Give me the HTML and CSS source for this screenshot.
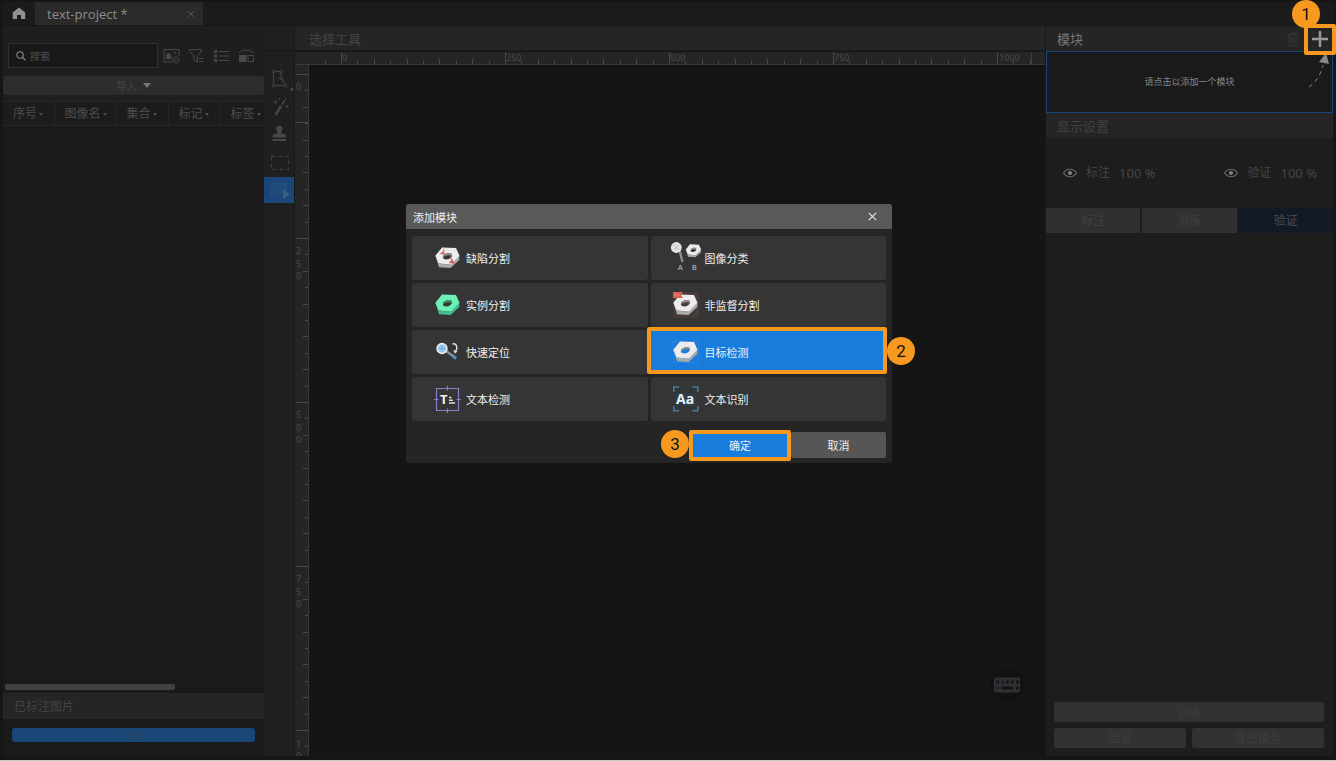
FILE: index.html
```html
<!DOCTYPE html>
<html lang="zh-CN">
<head>
<meta charset="utf-8">
<title>text-project</title>
<link rel="stylesheet" href="styles.css">
</head>
<body>
<svg class="defs" width="0" height="0" aria-hidden="true">
  <defs>
    <symbol id="nut" viewBox="0 0 25 22">
      <path class="nut-side" d="M0.5 9 L4 20.2 L15.5 21 L24.3 13 V8.6 L15.5 17.5 L3.5 16.8 Z"/>
      <path class="nut-face" fill-rule="evenodd" d="M0.3 8.8 L7 0.4 L21 1.1 L24.5 8.8 L15.8 17.6 L3.5 16.6 Z M8.1 11 C8.9 12.9 12.6 12.9 15.2 11.2 C17.4 9.8 17.4 7.1 15.6 6.3 C13.5 5.3 9.9 6.3 8.5 8.3 C7.8 9.3 7.7 10.2 8.1 11 Z"/>
      <path class="nut-hole" d="M8.1 10.8 C8 8 12.5 5 15.8 6.4 C17 7.1 17 8.6 16.4 9.6 C15.6 7.6 10.3 8 8.1 10.8 Z"/>
    </symbol>
    <symbol id="eye" viewBox="0 0 14 10">
      <path d="M0.6 5 C3.5 0 10.5 0 13.4 5 C10.5 10 3.5 10 0.6 5 Z" fill="none" stroke="#6a6a6a" stroke-width="1.1"/>
      <circle cx="7" cy="5" r="2.1" fill="#808080"/>
    </symbol>
  </defs>
</svg>

<div class="app">
  <header class="topbar">
    <button class="home" aria-label="主页">
      <svg width="14" height="13" viewBox="0 0 14 13"><path d="M7 0.5 L0.8 5.5 V12 H5 V8 H9 V12 H13.2 V5.5 Z" fill="#929292"/></svg>
    </button>
    <div class="tab"><span>text-project *</span>
      <button class="tab-close" aria-label="关闭标签"><svg width="8" height="8" viewBox="0 0 8 8"><path d="M0.8 0.8 L7.2 7.2 M7.2 0.8 L0.8 7.2" stroke="#565656"/></svg></button>
    </div>
  </header>

  <div class="main">
    <aside class="left">
      <div class="filters">
        <label class="search">
          <svg width="10" height="10" viewBox="0 0 10 10"><circle cx="4" cy="4" r="3.2" fill="none" stroke="#888" stroke-width="1.1"/><path d="M6.3 6.3 L9.3 9.3" stroke="#888" stroke-width="1.3"/></svg>
          <input type="text" placeholder="搜索" aria-label="搜索">
        </label>
        <div class="filter-icons">
          <button aria-label="图片"><svg width="17" height="16" viewBox="0 0 17 16"><path d="M9 14 H1 V1.5 H16 V8" fill="none" stroke="#484848"/><path d="M3 11 V8.5 Q3 5 5.5 5 Q8 5 8 8 L9 11 Z" fill="#484848"/><circle cx="12" cy="4.5" r="1" fill="#484848"/><circle cx="12.8" cy="11.7" r="3" fill="none" stroke="#484848"/><circle cx="12.8" cy="11.7" r="1" fill="#484848"/></svg></button>
          <button aria-label="筛选"><svg width="17" height="16" viewBox="0 0 17 16"><path d="M1.5 1.5 H13.5 V3 L9.5 8 V14 L6 12 V8 L1.5 3 Z" fill="none" stroke="#484848"/><path d="M11 10.5 H15.5 M11 13.5 H15.5" stroke="#484848"/></svg></button>
          <button aria-label="列表"><svg width="17" height="16" viewBox="0 0 17 16"><path d="M1.5 2.5 H3.5 V4.5 H1.5 Z M1.5 7 H3.5 V9 H1.5 Z M1.5 11.5 H3.5 V13.5 H1.5 Z M6 3.5 H16 M6 8 H16 M6 12.5 H16" fill="none" stroke="#4c4c4c" stroke-width="1.2"/></svg></button>
          <button aria-label="切换"><svg width="17" height="16" viewBox="0 0 17 16"><path d="M1 5 C4 1 12 1 15.5 5" fill="none" stroke="#484848"/><rect x="1" y="7" width="7.5" height="7" fill="#4a4a4a"/><rect x="10" y="7.5" width="5.5" height="6" fill="none" stroke="#484848"/></svg></button>
        </div>
      </div>
      <button class="import">导入 <i class="caret"></i></button>
      <div class="list">
        <table>
          <thead><tr><th class="c1">序号<i></i></th><th class="c2">图像名<i></i></th><th class="c3">集合<i></i></th><th class="c3">标记<i></i></th><th class="c3">标签<i></i></th></tr></thead>
        </table>
        <div class="scrollbar"></div>
      </div>
      <h2 class="bar bar-small">已标注图片</h2>
      <div class="progress-wrap"><div class="progress">0/0</div></div>
    </aside>

    <nav class="tools" aria-label="工具">
      <div class="tools-top"></div>
      <button aria-label="多边形"><svg width="30" height="26" viewBox="0 0 30 26"><g fill="none" stroke="#474747"><path d="M9.5 7 V17.5 M11.5 5.5 H15.5 M11 19.5 H20 M17 7 V11 M18 13 L21 18"/><circle cx="9.5" cy="5.5" r="1.4"/><circle cx="17" cy="5.5" r="1.4"/><circle cx="17" cy="12" r="1.4"/><circle cx="9.5" cy="19.5" r="1.4"/><circle cx="21.5" cy="19.5" r="1.4"/></g><path d="M29 21 V24.5 H25.5 Z" fill="#555"/></svg></button>
      <button aria-label="魔棒"><svg width="30" height="26" viewBox="0 0 30 26"><path d="M11.5 21 L17 12" stroke="#454545" stroke-width="2.6"/><path d="M18 10.5 L20.5 6.5" stroke="#454545" stroke-width="2"/><path d="M11.5 6 V10 M9.5 8 H13.5 M23 11 V14 M21.5 12.5 H24.5 M15.5 4 V6 M21.5 4 V6" stroke="#454545"/></svg></button>
      <button aria-label="图章"><svg width="30" height="26" viewBox="0 0 30 26"><path d="M12 6.5 C12 2.5 18.5 2.5 18.5 6.5 C18.5 8.5 17 9 17 12 H20 C21.5 12 22 13 22 15.5 H8.5 C8.5 13 9 12 10.5 12 H13.5 C13.5 9 12 8.5 12 6.5 Z" fill="#474747"/><path d="M8.5 18 H22" stroke="#474747" stroke-width="2"/></svg></button>
      <button aria-label="矩形选框"><svg width="30" height="26" viewBox="0 0 30 26"><rect x="7.5" y="6.5" width="17" height="13" fill="none" stroke="#3f3f3f" stroke-dasharray="4 3"/></svg></button>
      <button class="active" aria-label="选择工具"><svg width="30" height="26" viewBox="0 0 30 26"><rect x="8" y="7" width="14" height="10" fill="#1f4b79" stroke="#2a527c" stroke-dasharray="2 1"/><path d="M7 6 h2 v2 h-2 z M21 6 h2 v2 h-2 z M7 16 h2 v2 h-2 z" fill="#1a4678" stroke="#2e557e"/><path d="M19 12 V22 L26 17.5 Z" fill="#3a5c80"/></svg></button>
    </nav>

    <section class="center">
      <h2 class="bar">选择工具</h2>
      <div class="workspace">
        <svg class="ruler-x" width="100%" height="13">
          <defs><pattern id="px" x="46" y="0" width="164" height="13" patternUnits="userSpaceOnUse"><path d="M0.5 0 V12 M16.5 9 V12 M33.5 7 V12 M49.5 9 V12 M66.5 7 V12 M82.5 9 V12 M98.5 7 V12 M115.5 9 V12 M131.5 7 V12 M148.5 9 V12" stroke="#494949"/></pattern></defs>
          <rect x="28" y="0" width="100%" height="13" fill="url(#px)"/>
          <path d="M736.5 0 V12" stroke="#3c3c3c"/>
          <g class="ruler-text"><text x="47" y="9">0</text><text x="211" y="9">250</text><text x="375" y="9">500</text><text x="539" y="9">750</text><text x="704" y="9">1000</text></g>
        </svg>
        <svg class="ruler-y" width="14" height="100%">
          <defs><pattern id="py" x="0" y="9" width="14" height="164" patternUnits="userSpaceOnUse"><path d="M1 0.5 H13 M10 16.5 H13 M8 33.5 H13 M10 49.5 H13 M8 66.5 H13 M10 82.5 H13 M8 98.5 H13 M10 115.5 H13 M8 131.5 H13 M10 148.5 H13" stroke="#494949"/></pattern></defs>
          <rect y="9" width="14" height="100%" fill="url(#py)"/>
          <path d="M0 57.5 H13" stroke="#494949"/>
          <g class="ruler-text"><text x="1" y="25">0</text><text x="1" y="189">2</text><text x="1" y="202">5</text><text x="1" y="214">0</text><text x="1" y="353">5</text><text x="1" y="366">0</text><text x="1" y="378">0</text><text x="1" y="517">7</text><text x="1" y="530">5</text><text x="1" y="542">0</text><text x="1" y="682">1</text><text x="1" y="694">0</text></g>
        </svg>
        <div class="canvas">
          <button class="keyboard" aria-label="快捷键"><svg width="26" height="16" viewBox="0 0 26 16"><rect width="26" height="15" y="0.5" rx="1" fill="#303030"/><path d="M2 5 h3 M12 5 h3 M17 5 h3 M22 5 h3 M7 11 h12 M22 11 h3" stroke="#151515" stroke-width="3"/><path d="M7 5 h3 M2 11 h3" stroke="#172338" stroke-width="3"/></svg></button>
        </div>
      </div>
    </section>

    <aside class="right">
      <div class="bar modules-bar"><h2>模块</h2>
        <button class="trash" aria-label="删除"><svg width="12" height="14" viewBox="0 0 12 14"><path d="M0.5 2.5 H11.5 M4 2 V0.8 H8 V2 M1.8 3 V13.3 H10.2 V3 M4.2 5 V11 M6 5 V11 M7.8 5 V11" fill="none" stroke="#373737"/></svg></button>
        <div class="add-wrap"><button class="add" aria-label="添加"><svg width="16" height="16" viewBox="0 0 16 16"><path d="M8 0 V16 M0 8 H16" stroke="#999" stroke-width="2.4"/></svg></button><span class="badge badge-1">1</span></div>
      </div>
      <div class="module-box">请点击以添加一个模块
        <svg class="arrow" width="24" height="36" viewBox="0 0 24 36"><path d="M3 34 Q14 26 17 12" fill="none" stroke="#888" stroke-dasharray="4 4"/><path d="M20 0 L13 9 L23 11 Z" fill="#898989"/></svg>
      </div>
      <h2 class="bar display-bar">显示设置</h2>
      <div class="opacity">
        <div><svg width="14" height="10"><use href="#eye"/></svg><span>标注</span><span class="percent">100 %</span></div>
        <div><svg width="14" height="10"><use href="#eye"/></svg><span>验证</span><span class="percent">100 %</span></div>
      </div>
      <div class="modes"><button>标注</button><button>训练</button><button class="current">验证</button></div>
      <div class="actions"><button class="wide">训练</button><button>验证</button><button>导出模型</button></div>
    </aside>
  </div>
</div>

<div class="dialog" role="dialog" aria-labelledby="dialog-title">
  <div class="dialog-head"><h1 id="dialog-title">添加模块</h1>
    <button aria-label="关闭"><svg width="9" height="9" viewBox="0 0 9 9"><path d="M0.8 0.8 L8.2 8.2 M8.2 0.8 L0.8 8.2" stroke="#e4e4e4" stroke-width="1.2"/></svg></button></div>
  <div class="dialog-body">
    <div class="cards">
      <button class="card"><svg width="26" height="26" viewBox="0 0 26 26"><use href="#nut" x="1" y="2" width="25" height="22"/><path d="M10 2.5 L10.5 9.5 L5.5 9 L9 6.5 Z M16 10 L18 14 L21 18.5 L14.5 18 L17 15.5 Z" fill="#db5f5f"/></svg>缺陷分割</button>
      <button class="card"><svg width="26" height="26" viewBox="0 0 26 26"><path d="M6 3 L9.5 17" stroke="#8b8b8b" stroke-width="2.4"/><circle cx="3.3" cy="2.5" r="5.4" fill="#e4e4e4"/><path d="M1 0 L6 5 M6 0 L1 5" stroke="#aaa" stroke-width="0.8"/><use href="#nut" x="12.5" y="-1" width="16" height="14"/><text x="5" y="25" class="tiny">A</text><text x="19" y="25" class="tiny">B</text></svg>图像分类</button>
      <button class="card green"><svg width="26" height="26" viewBox="0 0 26 26"><use href="#nut" x="1" y="2" width="25" height="22"/></svg>实例分割</button>
      <button class="card"><svg width="26" height="26" viewBox="0 0 26 26"><rect width="26" height="26" fill="#463b38"/><use href="#nut" x="0" y="2" width="25" height="22"/><path d="M0 0 H10 L8 3 L10 6 H0 Z" fill="#d8614f"/><path d="M1.5 3 H7" stroke="#ee9d8f" stroke-dasharray="2 1"/></svg>非监督分割</button>
      <button class="card"><svg width="26" height="26" viewBox="0 0 26 26"><path d="M12 12 L19 17" stroke="#8d8d8d" stroke-width="2.4"/><path d="M18.5 16.7 L22 19.5" stroke="#5792c4" stroke-width="3"/><circle cx="8" cy="9.5" r="4.9" fill="#9ccdf0" stroke="#e7edf1" stroke-width="1.6"/><path d="M8 6 V13 M4.5 9.5 H11.5" stroke="#6aa7d2" stroke-width="0.8"/><path d="M18.5 5 C23 4 24 9.5 21.5 12.5" fill="none" stroke="#dedede" stroke-width="1.5"/><path d="M19 11 L23.5 12.5 L21 14.5 Z" fill="#dedede"/></svg>快速定位</button>
      <div class="chosen"><button class="card selected"><svg width="26" height="26" viewBox="0 0 26 26"><rect x="0.5" y="2.5" width="25" height="21" fill="none" stroke="#2784e0"/><use href="#nut" x="0" y="2" width="25" height="22"/></svg>目标检测</button><span class="badge badge-2">2</span></div>
      <button class="card"><svg width="26" height="26" viewBox="0 0 26 26"><path d="M2.5 2.5 H24.5 V24.5 H2.5 Z" fill="none" stroke="#8b7dc9" stroke-width="1.2"/><path d="M13.5 0 V4.5 M13.5 22.5 V27 M0 13.5 H4.5 M22.5 13.5 H27" stroke="#8b7dc9" stroke-width="1.2"/><text x="6" y="18" class="glyph">T</text><path d="M15 11.5 H17.5 M15 14.2 H19 M15 17 H21" stroke="#ddd" stroke-width="1.5"/></svg>文本检测</button>
      <button class="card"><svg width="26" height="26" viewBox="0 0 26 26"><rect x="3" y="7" width="20" height="13" fill="#2b4558" opacity="0.5"/><path d="M0.8 6 V1 H6 M19.5 1 H24.8 V6 M24.8 20 V24.8 H19.5 M6 24.8 H0.8 V20" fill="none" stroke="#417fa8" stroke-width="1.5"/><text x="3" y="18" class="glyph glyph-blue">Aa</text></svg>文本识别</button>
    </div>
    <div class="dialog-actions"><span class="badge badge-3">3</span><button class="ok">确定</button><button class="cancel">取消</button></div>
  </div>
</div>
</body>
</html>
```
FILE: styles.css
```css
* { box-sizing: border-box; }
body {
  margin: 0;
  background: #161616;
  color: #444;
  font: 12px/16px "Noto Sans", "Noto Sans CJK SC", sans-serif;
}
button {
  margin: 0; padding: 0; border: 0; background: none;
  color: inherit; font: inherit;
  display: flex; align-items: center; justify-content: center;
}
h1, h2 { margin: 0; font-weight: 400; }
svg { display: block; flex: none; }
.defs { position: absolute; }

.app {
  height: 100vh;
  padding: 2px 3px 4px;
  border-bottom: 1px solid #c8c8c8;
  display: flex;
  flex-direction: column;
}
.topbar { height: 24px; flex: none; display: flex; background: #1b1b1b; border-bottom: 1px solid #161616; }
.home { width: 32px; }
.tab {
  width: 168px; padding: 0 8px 0 12px;
  display: flex; align-items: center; justify-content: space-between;
  background: #2a2a2a; color: #8c8c8c; font-family: "Open Sans", sans-serif; font-size: 13px;
}
.main { flex: 1; min-height: 0; display: grid; grid-template-columns: 261px 31px 1fr 288px; }
.bar {
  height: 25px; flex: none; padding-left: 12px;
  display: flex; align-items: center;
  background: #252525; font-size: 13px;
}
.bar-small { height: 26px; padding: 2px 0 0 11px; font-size: 12px; }

.left { display: flex; flex-direction: column; background: #1e1e1e; min-width: 0; }
.filters { display: flex; align-items: center; justify-content: space-between; padding: 17px 9px 8px 5px; }
.search {
  width: 150px; height: 25px; padding-left: 7px;
  display: flex; align-items: center; gap: 4px;
  background: #181818; border: 1px solid #303030;
}
.search input { width: 100px; padding: 0; border: 0; outline: 0; background: none; color: #666; font: inherit; font-size: 10px; }
.search input::placeholder { color: #505050; opacity: 1; }
.filter-icons { display: flex; gap: 8px; }
.import { height: 19px; flex: none; gap: 6px; background: #2d2d2d; border-radius: 3px; color: #464646; font-size: 10px; }
.caret { border: 4px solid transparent; border-top: 5px solid #777; border-bottom: 0; }
.list { flex: 1; min-height: 0; margin-top: 6px; overflow: hidden; display: flex; flex-direction: column; justify-content: space-between; background: #1a1a1a; }
.list table { width: 269px; flex: none; table-layout: fixed; border-collapse: collapse; }
.list th {
  height: 24px; padding: 0 0 0 10px; text-align: left; font-weight: 400; white-space: nowrap;
  border: solid #262626; border-width: 1px 1px 1px 0;
  background: #1c1c1c; color: #4c4c4c;
}
.list th i { display: inline-block; margin: 0 0 2px 2px; border: 2px solid transparent; border-top: 3px solid #4c4c4c; border-bottom: 0; }
.c1 { width: 51px; }
.c2 { width: 62px; }
.c3 { width: 52px; }
.scrollbar { width: 170px; height: 6px; margin: 0 0 3px 2px; border-radius: 2px; background: #414141; }
.progress-wrap { padding: 9px; height: 37px; flex: none; background: #1a1a1a; }
.progress { height: 14px; border-radius: 3px; background: #184676; color: #35475c; font-size: 10px; line-height: 14px; text-align: center; }

.tools { border-right: 1px solid #181818; background: #1f1f1f; }
.tools-top { height: 25px; margin-bottom: 15px; border-bottom: 1px solid #181818; }
.tools button { width: 30px; height: 26px; margin-bottom: 2px; overflow: hidden; }
.tools .active { margin-top: -1px; background: #1a4678; }

.center { display: flex; flex-direction: column; min-width: 0; }
.center > .bar { padding: 2px 0 0 14px; border-bottom: 1px solid #1b1b1b; }
.workspace { flex: 1; min-height: 0; margin-top: 1px; display: grid; grid-template: 13px 1fr / 14px 1fr; background: #252525; overflow: hidden; }
.ruler-x { grid-column: 1 / 3; border-bottom: 1px solid #383838; }
.ruler-y { height: 100%; min-height: 0; border-right: 1px solid #383838; overflow: hidden; }
.ruler-text { fill: #4a4a4a; font-size: 9px; }
.canvas { background: #151515; display: flex; align-items: flex-end; justify-content: flex-end; padding: 0 21px 54px; }
.keyboard { width: 34px; height: 34px; border-radius: 50%; background: #121212; }

.right { display: flex; flex-direction: column; background: #1d1d1d; border-left: 1px solid #181818; }
.modules-bar { padding-left: 11px; }
.modules-bar h2 { flex: 1; font-size: 13px; color: #787878; }
.trash { width: 20px; }
.add-wrap { position: relative; z-index: 2; margin-left: 4px; }
.add { width: 26px; height: 24px; }
.add::after, .ok::after, .selected::after { content: ""; position: absolute; border: 4px solid #f6991e; border-radius: 2px; }
.add::after { inset: -3px -3px -4px -3px; }
.badge {
  position: absolute; z-index: 2;
  width: 28px; height: 28px; border-radius: 50%;
  background: #f6991e; color: #111;
  font: 17px/28px Roboto, sans-serif; text-align: center;
}
.badge-1 { left: -15px; top: -27px; }
.module-box {
  position: relative; height: 62px; flex: none;
  display: flex; align-items: center; justify-content: center;
  background: #1a1a1a; border: 1px solid #184676; color: #888; font-size: 9px;
}
.arrow { position: absolute; right: 2px; top: 1px; }
.display-bar { padding-left: 11px; color: #414141; }
.opacity { height: 70px; padding: 0 16px 0 17px; display: flex; align-items: center; justify-content: space-between; flex: none; color: #454545; }
.opacity div { display: flex; align-items: center; gap: 9px; }
.percent { font-size: 13px; }
.modes { display: grid; grid-template-columns: repeat(3, 1fr); gap: 2px; flex: none; }
.modes button { height: 25px; background: #303030; color: #404040; }
.modes .current { background: #131927; color: #4a5059; }
.actions { margin-top: auto; padding: 0 9px 8px 8px; display: grid; grid-template-columns: 1fr 1fr; gap: 6px; }
.actions button { height: 20px; padding-top: 2px; border-radius: 3px; background: #323232; color: #3d3d3d; }
.actions .wide { grid-column: 1 / 3; }

.dialog {
  position: absolute; left: 406px; top: 204px; width: 486px;
  border-radius: 3px; background: #252525; color: #f0f0f0; font-size: 11px;
}
.dialog-head { height: 25px; padding: 0 15px 0 7px; display: flex; align-items: center; justify-content: space-between; background: #595959; border-radius: 3px 3px 0 0; }
.dialog-head h1 { padding-top: 2px; font-size: 11px; }
.dialog-body { padding: 7px 6px 5px; }
.cards { display: grid; grid-template-columns: 1fr 1fr; gap: 3px; }
.card { width: 100%; height: 44px; padding: 2px 0 0 22px; gap: 6px; justify-content: flex-start; border-radius: 3px; background: #353535; }
.card svg { margin-bottom: 2px; overflow: visible; }
.nut-face { fill: var(--nut-face, #ececec); }
.nut-side { fill: var(--nut-side, #aaa); }
.nut-hole { fill: var(--nut-hole, #8d8d8d); }
.green { --nut-face: #6df0b5; --nut-side: #43bd8b; --nut-hole: #36976f; }
.chosen { position: relative; }
.selected { background: #187cdd; }
.selected::after { inset: -3px -1px 0 -4px; }
.badge-2 { right: -29px; top: 7px; }
.tiny { fill: #ccc; font: 7px "Liberation Sans", sans-serif; }
.glyph { fill: #eee; font: 700 13px "Noto Sans", sans-serif; }
.glyph-blue { fill: #e2f1fa; font-size: 14px; }
.dialog-actions { position: relative; margin-top: 11px; display: flex; justify-content: flex-end; gap: 2px; }
.dialog-actions button { height: 26px; padding-top: 2px; }
.ok { position: relative; width: 98px; background: #187cdd; }
.ok::after { inset: -2px -2px -3px; }
.cancel { width: 95px; background: #565656; border-radius: 2px; }
.badge-3 { right: 197px; top: -2px; }
```
